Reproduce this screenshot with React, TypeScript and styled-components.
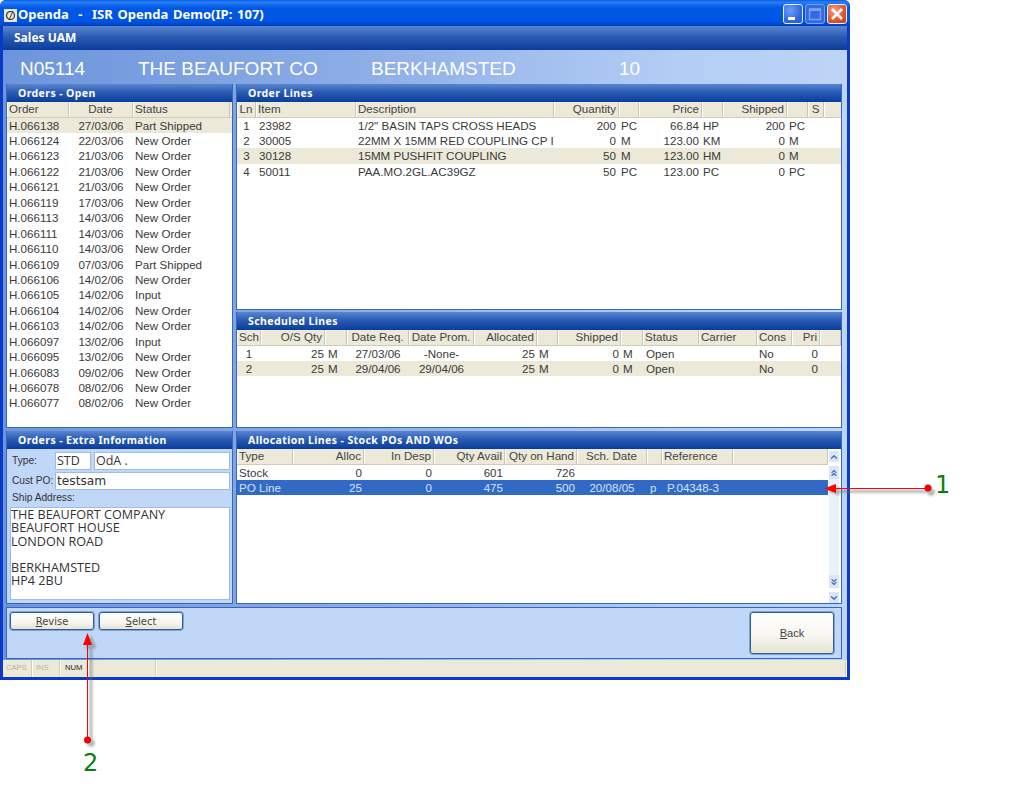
import React from 'react'
import styled, { createGlobalStyle } from 'styled-components'
import { ChevronUp, ChevronDown, ChevronsUp, ChevronsDown } from 'lucide-react'

const Global = createGlobalStyle`
  html, body { margin: 0; padding: 0; background: #fff; }
  body { font-family: "Liberation Sans", Arial, sans-serif; height: 808px; overflow: hidden; }
  * { box-sizing: border-box; }
`

type Col = { label?: string; w: number; align?: 'left' | 'right' | 'center'; pl?: number; pr?: number }

const orderCols: Col[] = [
  { label: 'Order', w: 62 },
  { label: 'Date', w: 64, align: 'center' },
  { label: 'Status', w: 97 },
]
const lineCols: Col[] = [
  { label: 'Ln', w: 19, align: 'center' },
  { label: 'Item', w: 100, pl: 3 },
  { label: 'Description', w: 198 },
  { label: 'Quantity', w: 65, align: 'right', pr: 3 },
  { w: 20 },
  { label: 'Price', w: 63, align: 'right', pr: 3 },
  { w: 21, pl: 1 },
  { label: 'Shipped', w: 64, align: 'right' },
  { w: 21 },
  { label: 'S', w: 16, align: 'center' },
  { w: 18 },
]
const schedCols: Col[] = [
  { label: 'Sch', w: 24, align: 'center' },
  { label: 'O/S Qty', w: 64, align: 'right', pr: 1 },
  { w: 22, pl: 3 },
  { label: 'Date Req.', w: 62, align: 'center' },
  { label: 'Date Prom.', w: 65, align: 'center' },
  { label: 'Allocated', w: 63, align: 'right' },
  { w: 21 },
  { label: 'Shipped', w: 63, align: 'right' },
  { w: 22 },
  { label: 'Status', w: 56, pl: 3 },
  { label: 'Carrier', w: 58 },
  { label: 'Cons', w: 35 },
  { label: 'Pri', w: 28, align: 'right' },
  { w: 21 },
]
const allocCols: Col[] = [
  { label: 'Type', w: 56 },
  { label: 'Alloc', w: 71, align: 'right' },
  { label: 'In Desp', w: 70, align: 'right' },
  { label: 'Qty Avail', w: 71, align: 'right' },
  { label: 'Qty on Hand', w: 72, align: 'right' },
  { label: 'Sch. Date', w: 70, align: 'center' },
  { w: 15, pl: 3 },
  { label: 'Reference', w: 71, pl: 5 },
  { w: 95 },
]

const orders = [
  ['H.066138', '27/03/06', 'Part Shipped'],
  ['H.066124', '22/03/06', 'New Order'],
  ['H.066123', '21/03/06', 'New Order'],
  ['H.066122', '21/03/06', 'New Order'],
  ['H.066121', '21/03/06', 'New Order'],
  ['H.066119', '17/03/06', 'New Order'],
  ['H.066113', '14/03/06', 'New Order'],
  ['H.066111', '14/03/06', 'New Order'],
  ['H.066110', '14/03/06', 'New Order'],
  ['H.066109', '07/03/06', 'Part Shipped'],
  ['H.066106', '14/02/06', 'New Order'],
  ['H.066105', '14/02/06', 'Input'],
  ['H.066104', '14/02/06', 'New Order'],
  ['H.066103', '14/02/06', 'New Order'],
  ['H.066097', '13/02/06', 'Input'],
  ['H.066095', '13/02/06', 'New Order'],
  ['H.066083', '09/02/06', 'New Order'],
  ['H.066078', '08/02/06', 'New Order'],
  ['H.066077', '08/02/06', 'New Order'],
]
const lines = [
  ['1', '23982', '1/2" BASIN TAPS CROSS HEADS', '200', 'PC', '66.84', 'HP', '200', 'PC', '', ''],
  ['2', '30005', '22MM X 15MM RED COUPLING CP I', '0', 'M', '123.00', 'KM', '0', 'M', '', ''],
  ['3', '30128', '15MM PUSHFIT COUPLING', '50', 'M', '123.00', 'HM', '0', 'M', '', ''],
  ['4', '50011', 'PAA.MO.2GL.AC39GZ', '50', 'PC', '123.00', 'PC', '0', 'PC', '', ''],
]
const sched = [
  ['1', '25', 'M', '27/03/06', '-None-', '25', 'M', '0', 'M', 'Open', '', 'No', '0', ''],
  ['2', '25', 'M', '29/04/06', '29/04/06', '25', 'M', '0', 'M', 'Open', '', 'No', '0', ''],
]
const alloc = [
  ['Stock', '0', '0', '601', '726', '', '', '', ''],
  ['PO Line', '25', '0', '475', '500', '20/08/05', 'p', 'P.04348-3', ''],
]

const Page = styled.div`
  position: relative;
  width: 1035px;
  height: 808px;
`
const Win = styled.div`
  width: 850px;
  height: 680px;
  display: flex;
  flex-direction: column;
  background: #0a3ac8;
  border-radius: 6px 6px 0 0;
  overflow: hidden;
`
const TitleBar = styled.div`
  height: 26px;
  flex: none;
  display: flex;
  align-items: center;
  padding: 2px 3px 0 4px;
  background: linear-gradient(180deg, #0a5ce6 0%, #2a80f5 8%, #0058e6 30%, #0055e5 80%, #0040c0 100%);
`
const AppIcon = styled.div`
  width: 13px;
  height: 13px;
  margin-right: 1px;
  flex: none;
`
const TitleText = styled.div`
  flex: 1;
  color: #fff;
  font: bold 13px "Noto Sans", sans-serif;
  word-spacing: 1.4px;
  white-space: pre;
`
const WinBtn = styled.div<{ $kind: 'min' | 'max' | 'close' }>`
  width: 20px;
  height: 20px;
  margin-left: 2px;
  border: 1px solid ${(p) => (p.$kind === 'max' ? '#7d9fe8' : '#e8eefc')};
  border-radius: 3px;
  display: flex;
  align-items: center;
  justify-content: center;
  background: ${(p) =>
    p.$kind === 'close'
      ? 'radial-gradient(circle at 35% 30%, #f0a080, #e2552b 60%, #c83a14)'
      : p.$kind === 'max'
        ? '#2f6be6'
        : 'radial-gradient(circle at 35% 30%, #6f9cf5, #2a62de 70%)'};
`
const Body = styled.div`
  flex: 1;
  margin: 0 3px 3px;
  padding: 0 4px 0 3px;
  display: flex;
  flex-direction: column;
  background: linear-gradient(90deg, #6d95dc 0%, #8aabe5 40%, #b3cdf4 80%, #bed4f7 100%);
`
const GradBar = styled.div`
  background: linear-gradient(180deg, #5a86d0 0%, #2a5cb4 45%, #0a3c9c 100%);
  color: #fff;
  font-family: "Noto Sans", sans-serif;
  font-weight: 700;
`
const SalesBar = styled(GradBar)`
  height: 24px;
  flex: none;
  margin: 0 -4px 0 -3px;
  padding: 0 11px;
  line-height: 23px;
  font-size: 12px;
`
const CustHeader = styled.div`
  height: 34px;
  flex: none;
  display: flex;
  align-items: center;
  padding: 4px 0 0 14px;
`
const CustField = styled.div<{ $w: number }>`
  width: ${(p) => p.$w}px;
  color: #fff;
  font-size: 19px;
  white-space: nowrap;
`
const Main = styled.div`
  display: grid;
  grid-template-columns: 227px 606px;
  grid-template-rows: 226px 116px 174px;
  column-gap: 3px;
  row-gap: 2px;
  width: 836px;
`
const Panel = styled.section<{ $row: string; $col: number; $top?: number }>`
  grid-row: ${(p) => p.$row};
  grid-column: ${(p) => p.$col};
  margin-top: ${(p) => p.$top ?? 0}px;
  display: flex;
  flex-direction: column;
  border: 1px solid #3566c2;
  border-top: none;
  background: #fff;
  overflow: hidden;
  min-height: 0;
`
const PanelTitle = styled(GradBar)`
  height: 18px;
  flex: none;
  margin: 0 -1px;
  padding-left: 12px;
  line-height: 18px;
  font-size: 10.5px;
  letter-spacing: 0.4px;
  white-space: nowrap;
`
const HeadRow = styled.div<{ $cols: string }>`
  height: 15.6px;
  flex: none;
  display: grid;
  grid-template-columns: ${(p) => p.$cols};
  background: #ece9d8;
  border-bottom: 1.5px solid #cfccba;
`
const HeadCell = styled.div<{ $align?: string; $pr?: number }>`
  text-align: ${(p) => p.$align ?? 'left'};
  font-size: 11.6px;
  line-height: 14px;
  color: #444;
  padding: 0 ${(p) => p.$pr ?? 2}px 0 2px;
  border-right: 1px solid #c9c6b4;
  box-shadow: inset 1px 0 0 #fff;
  white-space: nowrap;
  overflow: hidden;
`
const Row = styled.div<{ $cols: string; $tone?: 'alt' | 'sel' }>`
  height: 15.45px;
  flex: none;
  display: grid;
  grid-template-columns: ${(p) => p.$cols};
  background: ${(p) => (p.$tone === 'alt' ? '#ece9d8' : p.$tone === 'sel' ? '#316ac5' : 'transparent')};
  color: ${(p) => (p.$tone === 'sel' ? '#d5e2f8' : '#3a3a3a')};
`
const Cell = styled.div<{ $align?: string; $pl?: number; $pr?: number }>`
  text-align: ${(p) => p.$align ?? 'left'};
  font-size: 11.6px;
  line-height: 15.4px;
  padding: 0 ${(p) => p.$pr ?? 2}px 0 ${(p) => p.$pl ?? 2}px;
  white-space: nowrap;
  overflow: hidden;
`
const TableArea = styled.div`
  flex: 1;
  min-width: 0;
  display: flex;
  flex-direction: column;
`
const AllocBody = styled.div`
  flex: 1;
  display: flex;
  min-height: 0;
`
const Scroll = styled.div`
  width: 13px;
  flex: none;
  display: flex;
  flex-direction: column;
  padding: 2px 2px 0 1px;
`
const ScrollBtn = styled.div<{ $gap?: 'top' | 'bottom' }>`
  height: 11px;
  flex: none;
  display: flex;
  align-items: center;
  justify-content: center;
  color: #3f6fae;
  background: #d9e5fa;
  ${(p) => p.$gap === 'bottom' && 'margin-bottom: 4px;'}
  ${(p) => p.$gap === 'top' && 'margin-top: 4px;'}
`
const ScrollTall = styled(ScrollBtn)`
  height: 13px;
`
const ScrollGap = styled.div`
  flex: 1;
  background: #eaf0fc;
`
const ExtraBody = styled.div`
  flex: 1;
  background: #c1d7f8;
  padding: 3px 2px 3px 3px;
  display: flex;
  flex-direction: column;
`
const ExtraRow = styled.div`
  display: flex;
  align-items: flex-start;
  height: 20px;
  flex: none;
`
const ExtraLabel = styled.div`
  width: 45px;
  flex: none;
  padding-left: 2px;
  font-size: 10.2px;
  line-height: 17px;
  color: #333;
  white-space: nowrap;
`
const TextBox = styled.div<{ $w?: number; $mono?: boolean }>`
  ${(p) => (p.$w ? `width: ${p.$w}px; flex: none; margin-right: 3px;` : 'flex: 1;')}
  height: 18px;
  background: #fff;
  border: 1px solid #9dbbe6;
  padding-left: 1px;
  font: ${(p) => (p.$mono ? '12.2px/16px "DejaVu Sans"' : '12.5px/16px "Open Sans"')}, sans-serif;
  color: #333;
`
const AddrLabel = styled(ExtraLabel)`
  width: auto;
  height: 14px;
  line-height: 12px;
`
const AddrBox = styled.div`
  flex: 1;
  margin-top: 1px;
  background: #fff;
  border: 1px solid #9dbbe6;
  padding: 0;
  font: 12.6px/13.3px "Open Sans", sans-serif;
  color: #333;
  white-space: pre;
`
const BottomBar = styled.div`
  margin-top: 3px;
  height: 52px;
  width: 836px;
  flex: none;
  background: #c1d7f8;
  border: 1px solid #3566c2;
  display: flex;
  justify-content: space-between;
  padding: 4px 7px 4px 3px;
`
const ButtonGroup = styled.div`
  display: flex;
  gap: 5px;
  align-items: flex-start;
`
const Btn = styled.button<{ $big?: boolean }>`
  width: 84px;
  height: ${(p) => (p.$big ? 42 : 18)}px;
  padding: 0;
  border: 1px solid #2f5f96;
  box-shadow: 0 0 0 1px #7fa3d8;
  border-radius: 3px;
  background: linear-gradient(180deg, #fff 0%, #f6f5ee 60%, #e6e3d4 100%);
  color: #444;
  font: ${(p) => (p.$big ? '11px "Liberation Sans"' : '10px "DejaVu Sans"')}, sans-serif;
  u { text-decoration: underline; }
`
const StatusBar = styled.div`
  height: 17px;
  flex: none;
  margin: 1px -4px 0 -3px;
  background: #ece9d8;
  display: flex;
`
const StatusCell = styled.div<{ $w?: number; $on?: boolean }>`
  ${(p) => (p.$w ? `width: ${p.$w}px; flex: none;` : 'flex: 1;')}
  border-right: 1px solid #fff;
  box-shadow: inset -1px 0 0 #cfccba;
  font-size: 7.6px;
  line-height: 16px;
  padding-left: ${(p) => (p.$on ? 4 : 3)}px;
  color: ${(p) => (p.$on ? '#222' : '#b5b3a6')};
`
const Callout = styled.div<{ $x: number; $y: number }>`
  position: absolute;
  left: ${(p) => p.$x}px;
  top: ${(p) => p.$y}px;
  color: #0a7d12;
  font: 24px/28px "DejaVu Sans", sans-serif;
`
const ArrowLayer = styled.svg`
  position: absolute;
  left: 0;
  top: 0;
`

function colsOf(cols: Col[]) {
  return cols.map((c) => c.w + 'px').join(' ')
}

function Head({ cols }: { cols: Col[] }) {
  return (
    <HeadRow $cols={colsOf(cols)}>
      {cols.map((c, i) => (
        <HeadCell key={i} $align={c.align}>{c.label}</HeadCell>
      ))}
    </HeadRow>
  )
}

function Rows({ cols, data, tone }: { cols: Col[]; data: string[][]; tone: (i: number) => 'alt' | 'sel' | undefined }) {
  return (
    <>
      {data.map((r, i) => (
        <Row key={i} $cols={colsOf(cols)} $tone={tone(i)}>
          {r.map((v, j) => (
            <Cell key={j} $align={cols[j].align} $pl={cols[j].pl} $pr={cols[j].pr}>{v}</Cell>
          ))}
        </Row>
      ))}
    </>
  )
}

export default function App() {
  return (
    <Page>
      <Global />
      <Win>
        <TitleBar>
          <AppIcon>
            <svg width="13" height="13" viewBox="0 0 13 13">
              <rect width="13" height="13" fill="#e6e6de" />
              <circle cx="6.5" cy="6.5" r="4" fill="none" stroke="#333" strokeWidth="1.2" />
              <path d="M5 11 L9 2" stroke="#333" strokeWidth="0.9" />
            </svg>
          </AppIcon>
          <TitleText>{'Openda  -  ISR Openda Demo(IP: 107)'}</TitleText>
          <WinBtn $kind="min">
            <svg width="14" height="14" viewBox="0 0 14 14"><rect x="2" y="10" width="7" height="3" fill="#fff" /></svg>
          </WinBtn>
          <WinBtn $kind="max">
            <svg width="14" height="14" viewBox="0 0 14 14"><rect x="1.5" y="2" width="11" height="10.5" fill="none" stroke="#7d9fe8" strokeWidth="1.4" /><rect x="1" y="1.5" width="12" height="2.5" fill="#7d9fe8" /></svg>
          </WinBtn>
          <WinBtn $kind="close">
            <svg width="16" height="16" viewBox="0 0 16 16"><path d="M3 3 L13 13 M13 3 L3 13" stroke="#fff" strokeWidth="2.6" /></svg>
          </WinBtn>
        </TitleBar>
        <Body>
          <SalesBar>Sales UAM</SalesBar>
          <CustHeader>
            <CustField $w={118}>N05114</CustField>
            <CustField $w={233}>THE BEAUFORT CO</CustField>
            <CustField $w={248}>BERKHAMSTED</CustField>
            <CustField $w={40}>10</CustField>
          </CustHeader>
          <Main>
            <Panel $row="1 / 3" $col={1}>
              <PanelTitle>Orders - Open</PanelTitle>
              <Head cols={orderCols} />
              <Rows cols={orderCols} data={orders} tone={(i) => (i === 0 ? 'alt' : undefined)} />
            </Panel>
            <Panel $row="1" $col={2}>
              <PanelTitle>Order Lines</PanelTitle>
              <Head cols={lineCols} />
              <Rows cols={lineCols} data={lines} tone={(i) => (i === 2 ? 'alt' : undefined)} />
            </Panel>
            <Panel $row="2" $col={2}>
              <PanelTitle>Scheduled Lines</PanelTitle>
              <Head cols={schedCols} />
              <Rows cols={schedCols} data={sched} tone={(i) => (i === 1 ? 'alt' : undefined)} />
            </Panel>
            <Panel $row="3" $col={1} $top={1}>
              <PanelTitle>Orders - Extra Information</PanelTitle>
              <ExtraBody>
                <ExtraRow>
                  <ExtraLabel>Type:</ExtraLabel>
                  <TextBox $w={36}>STD</TextBox>
                  <TextBox>OdA .</TextBox>
                </ExtraRow>
                <ExtraRow>
                  <ExtraLabel>Cust PO:</ExtraLabel>
                  <TextBox $mono>testsam</TextBox>
                </ExtraRow>
                <AddrLabel>Ship Address:</AddrLabel>
                <AddrBox>{'THE BEAUFORT COMPANY\nBEAUFORT HOUSE\nLONDON ROAD\n\nBERKHAMSTED\nHP4 2BU'}</AddrBox>
              </ExtraBody>
            </Panel>
            <Panel $row="3" $col={2} $top={1}>
              <PanelTitle>Allocation Lines - Stock POs AND WOs</PanelTitle>
              <AllocBody>
                <TableArea>
                  <Head cols={allocCols} />
                  <Rows cols={allocCols} data={alloc} tone={(i) => (i === 1 ? 'sel' : undefined)} />
                </TableArea>
                <Scroll>
                  <ScrollBtn $gap="bottom"><ChevronUp size={10} strokeWidth={3} /></ScrollBtn>
                  <ScrollTall><ChevronsUp size={12} strokeWidth={2.6} /></ScrollTall>
                  <ScrollGap />
                  <ScrollTall><ChevronsDown size={12} strokeWidth={2.6} /></ScrollTall>
                  <ScrollBtn $gap="top"><ChevronDown size={10} strokeWidth={3} /></ScrollBtn>
                </Scroll>
              </AllocBody>
            </Panel>
          </Main>
          <BottomBar>
            <ButtonGroup>
              <Btn><u>R</u>evise</Btn>
              <Btn><u>S</u>elect</Btn>
            </ButtonGroup>
            <Btn $big><u>B</u>ack</Btn>
          </BottomBar>
          <StatusBar>
            <StatusCell $w={30}>CAPS</StatusCell>
            <StatusCell $w={28}>INS</StatusCell>
            <StatusCell $w={28} $on>NUM</StatusCell>
            <StatusCell $w={68} />
            <StatusCell />
          </StatusBar>
        </Body>
      </Win>
      <ArrowLayer width="1035" height="808" viewBox="0 0 1035 808">
        <defs>
          <filter id="soft" x="-20%" y="-20%" width="140%" height="140%">
            <feGaussianBlur stdDeviation="1.2" />
          </filter>
        </defs>
        <g filter="url(#soft)" opacity="0.45" fill="#666" stroke="#666">
          <path d="M838 491.5 H931" strokeWidth="3" fill="none" />
          <circle cx="931" cy="492" r="3.5" />
          <path d="M828 491 L839 487 V495 Z" />
          <path d="M91 648 V743" strokeWidth="3" fill="none" />
          <circle cx="91" cy="743" r="3.5" />
          <path d="M91 636 L86 648 H96 Z" />
        </g>
        <path d="M835 488.5 H928" stroke="#f00" strokeWidth="1" />
        <circle cx="928" cy="488" r="3.5" fill="#e00" />
        <path d="M824 488.5 L836 484 V493 Z" fill="#f00" />
        <path d="M87.5 645 V740" stroke="#f00" strokeWidth="1" />
        <circle cx="87.5" cy="740" r="3.5" fill="#e00" />
        <path d="M87.5 633 L83 645 H92 Z" fill="#f00" />
      </ArrowLayer>
      <Callout $x={935} $y={471}>1</Callout>
      <Callout $x={83} $y={749}>2</Callout>
    </Page>
  )
}
